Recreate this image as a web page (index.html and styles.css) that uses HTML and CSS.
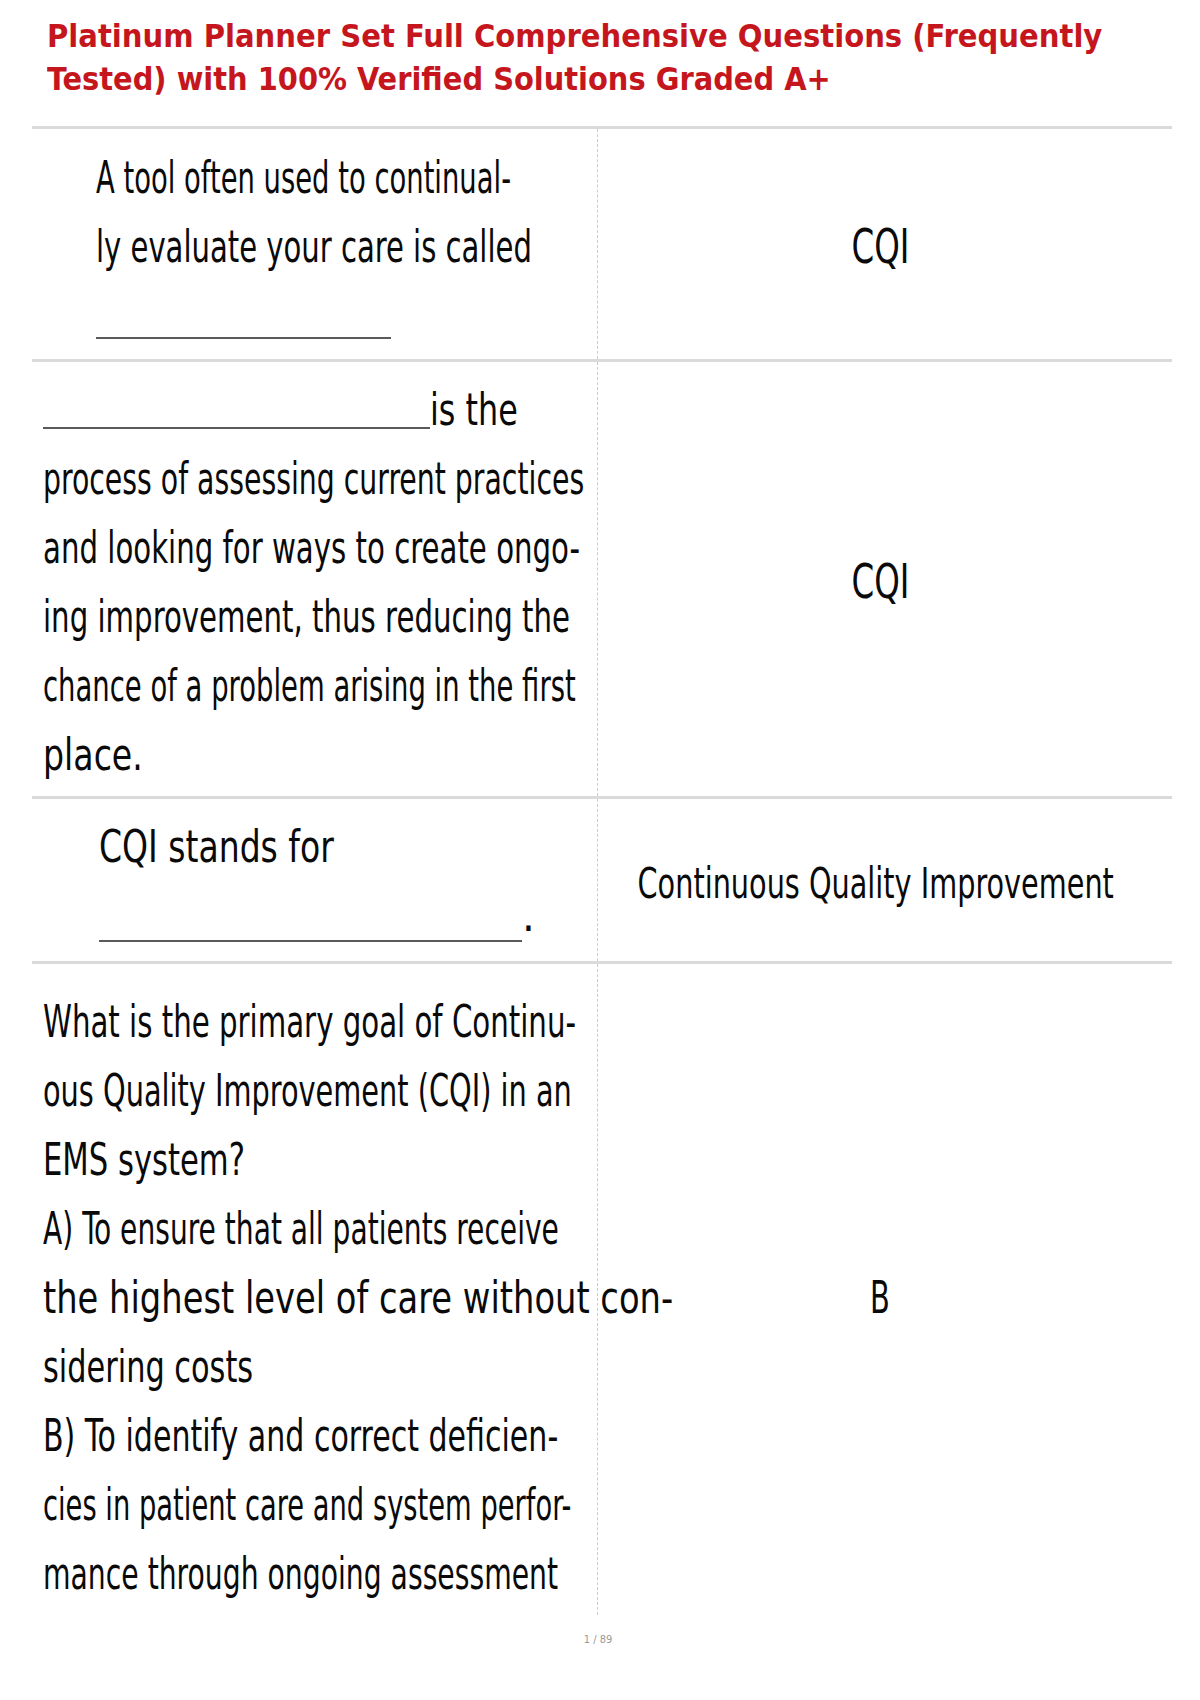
FILE: index.html
```html
<!DOCTYPE html>
<html lang="en">
<head>
<meta charset="utf-8">
<title>Platinum Planner Set Full Comprehensive Questions</title>
<link rel="stylesheet" href="styles.css">
</head>
<body>
<div class="page">
  <h1 class="title">
    <span class="tl"><span class="t" data-w="1055">Platinum Planner Set Full Comprehensive Questions (Frequently</span></span>
    <span class="tl"><span class="t" data-w="784">Tested) with 100% Verified Solutions Graded A+</span></span>
  </h1>

  <div class="cards">
    <div class="row r1">
      <div class="q">
        <div class="ln"><span class="t" data-w="415">A tool often used to continual-</span></div>
        <div class="ln"><span class="t" data-w="436">ly evaluate your care is called</span></div>
        <div class="ln"><span class="ul ul1"></span></div>
      </div>
      <div class="a"><span class="t" data-w="58">CQI</span></div>
    </div>

    <div class="row r2">
      <div class="q">
        <div class="ln"><span class="ul ul2"></span><span class="t" data-w="88">is the</span></div>
        <div class="ln"><span class="t" data-w="541">process of assessing current practices</span></div>
        <div class="ln"><span class="t" data-w="537">and looking for ways to create ongo-</span></div>
        <div class="ln"><span class="t" data-w="527">ing improvement, thus reducing the</span></div>
        <div class="ln"><span class="t" data-w="533">chance of a problem arising in the first</span></div>
        <div class="ln"><span class="t" data-w="100">place.</span></div>
      </div>
      <div class="a"><span class="t" data-w="58">CQI</span></div>
    </div>

    <div class="row r3">
      <div class="q">
        <div class="ln"><span class="t" data-w="235">CQI stands for</span></div>
        <div class="ln"><span class="ul ul3"></span>.</div>
      </div>
      <div class="a"><span class="t" data-w="476">Continuous Quality Improvement</span></div>
    </div>

    <div class="row r4">
      <div class="q">
        <div class="ln"><span class="t" data-w="533">What is the primary goal of Continu-</span></div>
        <div class="ln"><span class="t" data-w="529">ous Quality Improvement (CQI) in an</span></div>
        <div class="ln"><span class="t" data-w="202">EMS system?</span></div>
        <div class="ln"><span class="t" data-w="516">A) To ensure that all patients receive</span></div>
        <div class="ln"><span class="t" data-w="630">the highest level of care without con-</span></div>
        <div class="ln"><span class="t" data-w="210">sidering costs</span></div>
        <div class="ln"><span class="t" data-w="515">B) To identify and correct deficien-</span></div>
        <div class="ln"><span class="t" data-w="528">cies in patient care and system perfor-</span></div>
        <div class="ln"><span class="t" data-w="515">mance through ongoing assessment</span></div>
      </div>
      <div class="a"><span class="t" data-w="20">B</span></div>
    </div>
  </div>

  <div class="pg">1 / 89</div>
</div>
<script src="fit.js"></script>
</body>
</html>
```

FILE: styles.css
```css
html, body {
  margin: 0;
  padding: 0;
  background: #ffffff;
}

body {
  font-family: "DejaVu Sans Condensed", "DejaVu Sans", sans-serif;
  font-stretch: condensed;
  color: #0a0a0a;
}

.page {
  width: 1200px;
}

.title {
  margin: 0;
  padding: 15px 0 0 47px;
  font-size: 32px;
  line-height: 43px;
  font-weight: bold;
  color: #c5161d;
}

.tl {
  display: block;
  height: 43px;
  white-space: nowrap;
}

.t {
  display: inline-block;
  white-space: nowrap;
  transform-origin: 0 50%;
  transform: scaleX(0.62);
}

.title .t {
  transform: scaleX(0.9);
}

.cards {
  margin: 25px 0 0 32px;
  width: 1140px;
}

.row {
  display: grid;
  grid-template-columns: 566px 574px;
  border-top: 3px solid #dadada;
}

.q {
  border-right: 1px dashed #cccccc;
  font-size: 45px;
  line-height: 69px;
}

.a {
  display: flex;
  flex-direction: column;
  align-items: center;
  font-size: 48px;
  line-height: 69px;
  padding-right: 10px;
}

.a .t {
  transform-origin: 50% 50%;
}

.ln {
  height: 69px;
  white-space: nowrap;
}

.ul {
  display: inline-block;
  height: 0;
  border-bottom: 2px solid #5a5a5a;
}

.ul1 {
  width: 295px;
  vertical-align: -8px;
}

.ul2 {
  width: 387px;
  vertical-align: -4px;
}

.ul3 {
  width: 423px;
  vertical-align: -11px;
}

.r1 .q {
  padding: 14px 0 9px 64px;
}

.r1 .a {
  padding-top: 83px;
}

.r2 .q {
  padding: 13px 0 7px 11px;
}

.r2 .a {
  padding-top: 185px;
}

.r3 .q {
  padding: 13px 0 11px 67px;
}

.r3 .a {
  padding-top: 50px;
  padding-right: 18px;
  font-size: 43px;
}

.r4 .q {
  padding: 23px 0 7px 11px;
}

.r4 .a {
  padding-top: 299px;
  font-size: 45px;
}

.pg {
  margin: 18px 0 0 32px;
  width: 1132px;
  text-align: center;
  font-family: "DejaVu Sans", sans-serif;
  font-size: 11px;
  line-height: 14px;
  color: #9a9a9a;
}
```

FILE: fit.js
```js
(function () {
  function fit() {
    var items = document.querySelectorAll('.t[data-w]');
    for (var i = 0; i < items.length; i++) {
      var el = items[i];
      var w = el.offsetWidth;
      if (w > 0) {
        el.style.transform = 'scaleX(' + (parseFloat(el.getAttribute('data-w')) / w).toFixed(4) + ')';
      }
    }
  }
  fit();
  if (document.fonts && document.fonts.ready) {
    document.fonts.ready.then(fit);
  }
})();
```
